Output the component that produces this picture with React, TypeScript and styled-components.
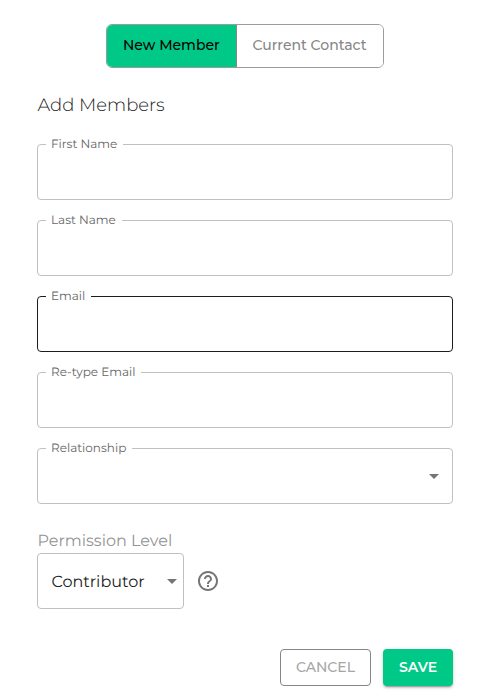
import React from "react";
import styled, { createGlobalStyle } from "styled-components";

const GlobalStyle = createGlobalStyle`
  *, *::before, *::after { box-sizing: border-box; }
  body { margin: 0; background: #fff; }
  button, fieldset, legend { font: inherit; }
`;

const Page = styled.main`
  width: 493px;
  height: 696px;
  overflow: hidden;
  padding: 24px 40px 0 37px;
  display: flex;
  flex-direction: column;
  background: #fff;
  color: #212121;
  font-family: Montserrat, Inter, sans-serif;
  text-rendering: geometricPrecision;
`;

const ToggleGroup = styled.div`
  display: flex;
  width: 278px;
  height: 44px;
  margin-left: 69px;
  border: 1px solid #9c9c9c;
  border-radius: 6px;
  overflow: hidden;
`;

const ToggleButton = styled.button<{ $active?: boolean }>`
  flex: ${(p) => (p.$active ? "0 0 130px" : "1")};
  padding: 0 0 2px ${(p) => (p.$active ? 16 : 15.5)}px;
  border: 0;
  border-right: ${(p) => (p.$active ? "1px solid #888" : "0")};
  background: ${(p) => (p.$active ? "#00c987" : "#fff")};
  color: ${(p) => (p.$active ? "#000" : "#868686")};
  font-size: 14px;
  font-weight: 500;
  text-align: left;
  white-space: nowrap;
`;

const Title = styled.h1`
  margin: 25px 0 0;
  padding-left: 0.5px;
  height: 24px;
  font-size: 18px;
  line-height: 24px;
  font-weight: 300;
`;

const Fields = styled.div`
  display: flex;
  flex-direction: column;
  gap: 12px;
  margin-top: 19px;
`;

const Field = styled.fieldset<{ $strong?: boolean }>`
  width: 416px;
  height: 64px;
  margin: 0;
  padding: 0 13px 0 8px;
  border: 1px solid ${(p) => (p.$strong ? "#1c1c1c" : "#c0c0c0")};
  border-radius: 4px;
`;

const Legend = styled.legend`
  height: 16px;
  padding: 0 5.7px 0 5px;
  color: #666;
  font-size: 12px;
  line-height: 18px;
`;

const ArrowSlot = styled.div`
  height: 40px;
  display: flex;
  align-items: center;
  justify-content: flex-end;
`;

const PermissionTitle = styled.div`
  margin-top: 26px;
  padding-left: 0.5px;
  height: 23px;
  color: #949494;
  font-size: 16px;
  line-height: 23px;
`;

const PermissionRow = styled.div`
  display: flex;
  align-items: center;
  gap: 12px;
`;

const Select = styled.div`
  width: 147px;
  height: 56px;
  padding: 0 6px 0 13.5px;
  display: flex;
  align-items: center;
  justify-content: space-between;
  border: 1px solid #c0c0c0;
  border-radius: 4px;
  font-size: 16px;
`;

const SelectValue = styled.span`
  padding-top: 2px;
`;

const Actions = styled.div`
  display: flex;
  justify-content: flex-end;
  gap: 12px;
  margin-top: 40px;
`;

const ActionButton = styled.button<{ $primary?: boolean }>`
  width: ${(p) => (p.$primary ? 70 : 91)}px;
  height: 37px;
  padding: 0 0 1px ${(p) => (p.$primary ? 16 : 15)}px;
  border: ${(p) => (p.$primary ? "0" : "1px solid #858585")};
  border-radius: 4px;
  background: ${(p) => (p.$primary ? "#00c987" : "#fff")};
  color: ${(p) => (p.$primary ? "#fff" : "#a6a6a6")};
  font-size: 14px;
  font-weight: ${(p) => (p.$primary ? 600 : 500)};
  text-align: left;
  box-shadow: ${(p) =>
    p.$primary
      ? "0 3px 1px -2px rgba(0,0,0,.2), 0 2px 2px rgba(0,0,0,.14), 0 1px 5px rgba(0,0,0,.12)"
      : "none"};
`;

const Arrow = () => (
  <svg width="10" height="5" viewBox="0 0 10 5" fill="#757575">
    <path d="M0 0h10L5 5z" />
  </svg>
);

const Help = () => (
  <svg width="24" height="24" viewBox="0 0 24 24" fill="#757575">
    <path d="M11 18h2v-2h-2v2zm1-16C6.48 2 2 6.48 2 12s4.48 10 10 10 10-4.48 10-10S17.52 2 12 2zm0 18c-4.41 0-8-3.59-8-8s3.59-8 8-8 8 3.59 8 8-3.59 8-8 8zm0-14c-2.21 0-4 1.79-4 4h2c0-1.1.9-2 2-2s2 .9 2 2c0 2-3 1.75-3 5h2c0-2.25 3-2.5 3-5 0-2.21-1.79-4-4-4z" />
  </svg>
);

const fields = [
  { name: "First Name" },
  { name: "Last Name" },
  { name: "Email", strong: true },
  { name: "Re-type Email" },
  { name: "Relationship", select: true },
];

export default function App() {
  return (
    <Page>
      <GlobalStyle />
      <ToggleGroup>
        <ToggleButton $active>New Member</ToggleButton>
        <ToggleButton>Current Contact</ToggleButton>
      </ToggleGroup>
      <Title>Add Members</Title>
      <Fields>
        {fields.map((f) => (
          <Field key={f.name} $strong={f.strong}>
            <Legend>{f.name}</Legend>
            {f.select && <ArrowSlot><Arrow /></ArrowSlot>}
          </Field>
        ))}
      </Fields>
      <PermissionTitle>Permission Level</PermissionTitle>
      <PermissionRow>
        <Select><SelectValue>Contributor</SelectValue><Arrow /></Select>
        <Help />
      </PermissionRow>
      <Actions>
        <ActionButton>CANCEL</ActionButton>
        <ActionButton $primary>SAVE</ActionButton>
      </Actions>
    </Page>
  );
}
